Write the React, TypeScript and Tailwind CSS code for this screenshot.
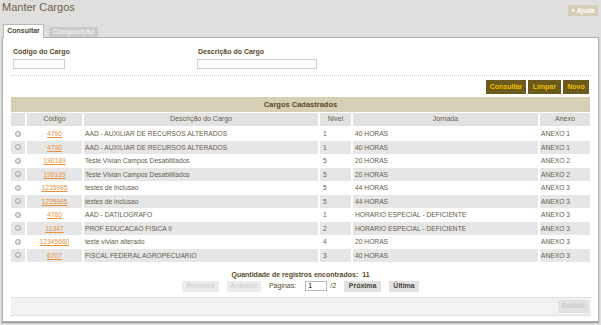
const rows = [
  { codigo: "4790", desc: "AAD - AUXILIAR DE RECURSOS ALTERADOS", nivel: "1", jornada: "40 HORAS", anexo: "ANEXO 1" },
  { codigo: "4790", desc: "AAD - AUXILIAR DE RECURSOS ALTERADOS", nivel: "1", jornada: "40 HORAS", anexo: "ANEXO 1" },
  { codigo: "190189", desc: "Teste Vivian Campos Desabilitados", nivel: "5", jornada: "20 HORAS", anexo: "ANEXO 2" },
  { codigo: "190189", desc: "Teste Vivian Campos Desabilitados", nivel: "5", jornada: "20 HORAS", anexo: "ANEXO 2" },
  { codigo: "1235985", desc: "testes de inclusao", nivel: "5", jornada: "44 HORAS", anexo: "ANEXO 3" },
  { codigo: "1235985", desc: "testes de inclusao", nivel: "5", jornada: "44 HORAS", anexo: "ANEXO 3" },
  { codigo: "4780", desc: "AAD - DATILOGRAFO", nivel: "1", jornada: "HORARIO ESPECIAL - DEFICIENTE", anexo: "ANEXO 3" },
  { codigo: "11347", desc: "PROF EDUCACAO FISICA II", nivel: "2", jornada: "HORARIO ESPECIAL - DEFICIENTE", anexo: "ANEXO 3" },
  { codigo: "12345680", desc: "teste vivian alterado", nivel: "4", jornada: "20 HORAS", anexo: "ANEXO 3" },
  { codigo: "6707", desc: "FISCAL FEDERAL AGROPECUARIO", nivel: "3", jornada: "40 HORAS", anexo: "ANEXO 3" },
];

const cols = "grid grid-cols-[14px_55px_234px_31px_185px_50px] gap-x-[2px]";

const Radio = () => (
  <span className="block w-[6px] h-[6px] rounded-full border border-[#a8a8a8] bg-[radial-gradient(circle_at_40%_35%,#f4f4f4,#c4c4c4)]" />
);

const App = () => {
  return (
    <div className="w-[601px] h-[325px] overflow-hidden bg-[#dfdfdf] font-['Liberation_Sans',Arial,sans-serif] text-[#665c4c]">
      <div className="flex justify-between items-start h-[24px] pl-[2px] pr-[3px]">
        <h1 className="text-[11px] leading-[14px] text-[#6f5f3f]">Manter Cargos</h1>
        <button className="mt-[5px] h-[11px] w-[30px] bg-[#d6ceb4] text-white text-[6.5px] font-bold leading-[11px]">
          + Ajuda
        </button>
      </div>

      <div className="flex items-end h-[13px] pl-[3px] gap-[5px]">
        <div className="relative z-10 -mb-px h-[14px] w-[41px] bg-white border border-b-0 border-[#b8b8b8] text-[7px] font-bold text-[#4e4a3a] flex items-center justify-center">
          Consultar
        </div>
        <div className="h-[10px] w-[49px] bg-[#cacaca] text-[7px] font-bold text-[#ededed] flex items-center justify-center">
          Composição
        </div>
      </div>

      <div className="mx-[2px] w-[597px] h-[285px] bg-white border border-[#b0b0b0] shadow-[0_1px_1px_#9a9a9a] px-[8px]">
        <div className="flex pt-[9px] h-[37px]">
          <div className="w-[186px] pl-[2px]">
            <label className="block text-[7px] font-bold leading-[9px] text-[#5a4a28]">Código do Cargo</label>
            <input className="mt-[3px] block w-[52px] h-[10px] border border-[#cfcfcf]" />
          </div>
          <div>
            <label className="block text-[7px] font-bold leading-[9px] text-[#5a4a28] pl-px">Descrição do Cargo</label>
            <input className="mt-[3px] block w-[120px] h-[10px] border border-[#cfcfcf]" />
          </div>
        </div>

        <div className="w-[580px] border-t border-dotted border-[#c8c8c8]" />

        <div className="w-[579px] flex justify-end gap-[2px] pt-[4px] pr-px h-[21px]">
          <button className="h-[14px] w-[40px] bg-[#6b5a1c] text-[#efbf00] text-[7px] font-bold">Consultar</button>
          <button className="h-[14px] w-[33px] bg-[#6b5a1c] text-[#efbf00] text-[7px] font-bold">Limpar</button>
          <button className="h-[14px] w-[26px] bg-[#6b5a1c] text-[#efbf00] text-[7px] font-bold">Novo</button>
        </div>

        <div className="w-[579px]">
          <div className="h-[15px] bg-[#d5cfb5] text-[7.5px] font-bold text-[#5a4a28] flex items-center justify-center">
            Cargos Cadastrados
          </div>
          <div className={`${cols} mt-px h-[13px] text-[7px] text-[#6b5e4a]`}>
            <div className="bg-[#e2e2e2]" />
            <div className="bg-[#e2e2e2] flex items-center justify-center">Código</div>
            <div className="bg-[#e2e2e2] flex items-center justify-center">Descrição do Cargo</div>
            <div className="bg-[#e2e2e2] flex items-center justify-center">Nivel</div>
            <div className="bg-[#e2e2e2] flex items-center justify-center">Jornada</div>
            <div className="bg-[#e2e2e2] flex items-center justify-center">Anexo</div>
          </div>
          <div className="mt-px">
            {rows.map((r, i) => {
              const bg = i % 2 === 1 ? "bg-[#e6e6e6]" : "bg-white";
              return (
                <div key={i} className={`${cols} h-[13.5px] text-[6.7px] leading-[13.5px]`}>
                  <div className={`${bg} flex items-center justify-center`}>
                    <Radio />
                  </div>
                  <div className={`${bg} text-center`}>
                    <a className="text-[#e8923a] underline">{r.codigo}</a>
                  </div>
                  <div className={`${bg} pl-px whitespace-nowrap`}>{r.desc}</div>
                  <div className={`${bg} pl-[3px]`}>{r.nivel}</div>
                  <div className={`${bg} pl-[2px] whitespace-nowrap`}>{r.jornada}</div>
                  <div className={`${bg} pl-px`}>{r.anexo}</div>
                </div>
              );
            })}
          </div>
        </div>

        <div className="w-[579px] mt-[8px] text-center text-[7px] font-bold leading-[9px] text-[#5a4a28]">
          Quantidade de registros encontrados:&nbsp;&nbsp;11
        </div>
        <div className="w-[579px] flex items-center justify-center gap-[8px] mt-[1px] h-[12px] text-[7px]">
          <button className="h-[11px] w-[37px] bg-[#ececec] text-[#d4d4d4] font-bold">Primeira</button>
          <button className="h-[11px] w-[34px] bg-[#ececec] text-[#d4d4d4] font-bold">Anterior</button>
          <span className="flex items-center gap-[9px]">
            <span className="text-[#5a4a28]">Páginas:</span>
            <span className="flex items-center gap-[3px]">
              <input defaultValue="1" className="w-[22px] h-[10px] border border-[#b8b8b8] text-[7px] pl-[2px] text-black" />
              <span className="text-[#5a4a28]">/2</span>
            </span>
          </span>
          <button className="h-[11px] w-[37px] bg-[#e2e2e2] text-[#4a4438] font-bold">Próxima</button>
          <button className="h-[11px] w-[30px] bg-[#e2e2e2] text-[#4a4438] font-bold">Última</button>
        </div>

        <div className="mt-[5px] w-[580px] h-[19px] bg-[#f2f2f2] border-y border-dotted border-[#cfcfcf] flex items-center justify-end pr-[2px]">
          <button className="h-[13px] w-[31px] bg-[#e2e2e2] text-[#c8c8c8] text-[7px] font-bold">Excluir</button>
        </div>
      </div>
    </div>
  );
};

export default App;
